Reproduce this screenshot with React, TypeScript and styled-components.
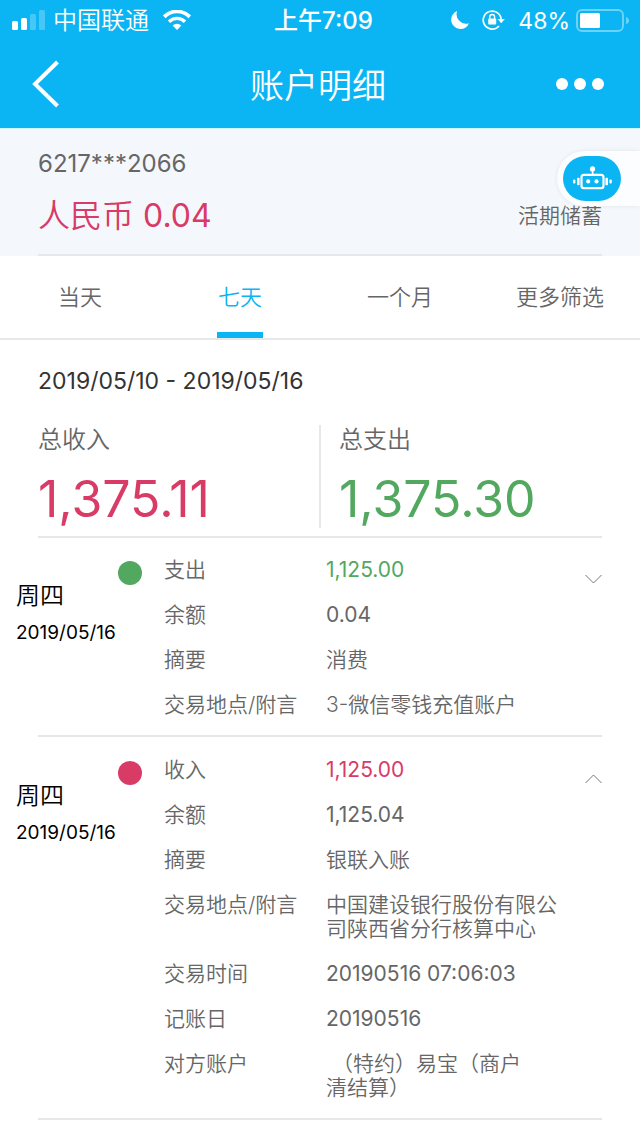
import React, { useState } from "react";
import styled, { createGlobalStyle } from "styled-components";

const color = {
  blue: "#0bb5f3",
  pink: "#d83b66",
  green: "#52a85f",
  grey: "#666666",
  line: "#e6e7e9",
};

const GlobalStyle = createGlobalStyle`
  * { box-sizing: border-box; }
  body {
    margin: 0;
    background: #ffffff;
    color: ${color.grey};
    font-family: Inter, "Noto Sans CJK SC", sans-serif;
    font-size: 21px;
    line-height: 24px;
    font-weight: 350;
  }
  button {
    font: inherit;
    color: inherit;
    background: none;
    border: 0;
    padding: 0;
    cursor: pointer;
  }
  h1, p, dl, dd, dt, ul { margin: 0; padding: 0; }
  svg { display: block; }
`;

const Page = styled.div`
  min-height: 100vh;
`;

const Top = styled.header`
  background: ${color.blue};
  color: #ffffff;
`;

const StatusBar = styled.div`
  display: grid;
  grid-template-columns: 1fr auto 1fr;
  align-items: center;
  height: 40px;
  padding: 0 11px 0 12px;
`;

const StatusGroup = styled.div<{ $end?: boolean }>`
  display: flex;
  align-items: center;
  justify-content: ${(p) => (p.$end ? "flex-end" : "flex-start")};
  font-size: ${(p) => (p.$end ? 23 : 24)}px;
  gap: ${(p) => (p.$end ? 6 : 8)}px;
`;

const StatusIcon = styled.span`
  margin-right: 7px;
`;

const Carrier = styled.span`
  padding-top: 2px;
  margin-right: 6px;
`;

const Charge = styled.span`
  padding-top: 2px;
  font-weight: 400;
`;

const Clock = styled.span`
  padding: 2px 0 0 6px;
  font-size: 24px;
  font-weight: 500;
`;

const NavBar = styled.nav`
  display: grid;
  grid-template-columns: 1fr auto 1fr;
  align-items: center;
  height: 88px;
  padding: 0 36px 0 32px;
`;

const Title = styled.h1`
  padding-top: 4px;
  font-size: 34px;
  line-height: 48px;
  font-weight: 350;
`;

const MoreButton = styled.button`
  justify-self: end;
`;

const BackButton = styled.button`
  justify-self: start;
`;

const Account = styled.section`
  position: relative;
  padding: 0 38px;
  background: #f4f8fc;
  border-top: 1px solid #cdfbff;
`;

const AccountBody = styled.div`
  display: flex;
  flex-direction: column;
  gap: 18px;
  height: 127px;
  padding-top: 21px;
  border-bottom: 2px solid ${color.line};
`;

const CardNumber = styled.p`
  font-size: 24px;
  line-height: 28px;
  font-weight: 400;
`;

const BalanceRow = styled.div`
  display: flex;
  justify-content: space-between;
  align-items: center;
  line-height: 40px;
`;

const Balance = styled.strong`
  font-size: 32px;
  font-weight: 350;
  color: ${color.pink};
`;

const BalanceAmount = styled.span`
  font-weight: 400;
`;

const AccountKind = styled.span`
  font-size: 21px;
`;

const Assistant = styled.button`
  position: absolute;
  top: 22px;
  right: 0;
  display: flex;
  align-items: center;
  width: 83px;
  height: 55px;
  padding-left: 6px;
  border-radius: 28px 0 0 28px;
  background: #fbfdfe;
  box-shadow: 0 0 4px rgba(0, 0, 0, 0.08);
`;

const AssistantFace = styled.span`
  display: flex;
  align-items: center;
  justify-content: center;
  width: 58px;
  height: 45px;
  border-radius: 23px;
  background: ${color.blue};
  color: #ffffff;
`;

const Tabs = styled.div`
  display: grid;
  grid-template-columns: repeat(4, 1fr);
  height: 84px;
  border-bottom: 2px solid ${color.line};
`;

const Tab = styled.button<{ $active: boolean }>`
  display: flex;
  flex-direction: column;
  align-items: center;
  justify-content: space-between;
  padding-top: 25px;
  font-size: 22px;
  line-height: 32px;
  color: ${(p) => (p.$active ? color.blue : color.grey)};

  &::after {
    content: "";
    width: 46px;
    height: 6px;
    background: ${(p) => (p.$active ? color.blue : "transparent")};
  }
`;

const Summary = styled.section`
  margin: 0 38px;
  padding: 27px 0 8px;
  border-bottom: 2px solid ${color.line};
`;

const Range = styled.p`
  margin-bottom: 30px;
  font-size: 23px;
  line-height: 28px;
  font-weight: 400;
  color: #333333;
`;

const Totals = styled.dl`
  display: grid;
  grid-template-columns: 1fr 1fr;
`;

const Total = styled.div`
  height: 103px;

  & + & {
    margin-left: -1px;
    padding-left: 18px;
    border-left: 2px solid ${color.line};
  }
`;

const TotalLabel = styled.dt`
  font-size: 24px;
  line-height: 30px;
`;

const TotalValue = styled.dd<{ $tone: string }>`
  padding-top: 14px;
  font-size: 50px;
  line-height: 60px;
  font-weight: 400;
  color: ${(p) => p.$tone};
`;

const Entries = styled.ul`
  list-style: none;
`;

const EntryBody = styled.div`
  display: grid;
  grid-template-columns: 102px 46px 1fr 24px;
  padding: 20px 38px 0 16px;
`;

const When = styled.div`
  padding-top: 24px;
  color: #000000;
`;

const Weekday = styled.p`
  font-size: 24px;
  line-height: 28px;
`;

const Day = styled.time`
  display: block;
  padding-top: 11px;
  font-size: 19px;
  line-height: 24px;
  font-weight: 400;
  white-space: nowrap;
`;

const Dot = styled.span<{ $tone: string }>`
  width: 24px;
  height: 24px;
  margin-top: 3px;
  border-radius: 50%;
  background: ${(p) => p.$tone};
`;

const Details = styled.dl`
  display: grid;
  gap: 21px;
  padding-bottom: 18px;
`;

const Detail = styled.div`
  display: grid;
  grid-template-columns: 162px 1fr;
  padding-right: 16px;
`;

const DetailValue = styled.dd<{ $tone?: string; $digits?: boolean }>`
  color: ${(p) => p.$tone ?? color.grey};
  font-weight: ${(p) => (p.$digits ? 400 : 350)};
  white-space: pre-line;
`;

const Toggle = styled.button`
  align-self: start;
  justify-self: end;
  padding: 16px 0 12px;
`;

const Divider = styled.div`
  height: 2px;
  margin: 0 38px 1px;
  background: ${color.line};
`;

const Signal = () => (
  <svg width="33" height="20" viewBox="0 0 33 20" fill="currentColor" aria-hidden="true">
    <rect x="0" y="11" width="6" height="9" rx="1.5" />
    <rect x="9" y="8" width="6" height="12" rx="1.5" />
    <rect x="18" y="4" width="6" height="16" rx="1.5" opacity="0.25" />
    <rect x="27" y="0" width="6" height="20" rx="1.5" opacity="0.25" />
  </svg>
);

const Wifi = () => (
  <svg width="28" height="20" viewBox="0 0 28 20" fill="none" stroke="currentColor" aria-hidden="true">
    <path d="M1.2 6.8a18 18 0 0 1 25.6 0" strokeWidth="3.8" />
    <path d="M6 11.7a11.3 11.3 0 0 1 16 0" strokeWidth="3.4" />
    <path d="M14 20l-4.4-4.4a6.3 6.3 0 0 1 8.8 0z" fill="currentColor" stroke="none" />
  </svg>
);

const Moon = () => (
  <svg width="18" height="18" viewBox="0 0 18 18" fill="currentColor" aria-hidden="true">
    <path d="M6.2 0A9.3 9.3 0 0 0 9 18a9.6 9.6 0 0 0 9-5.8A9.4 9.4 0 0 1 6.2 0z" />
  </svg>
);

const RotationLock = () => (
  <svg width="23" height="20" viewBox="0 0 23 20" fill="none" stroke="currentColor" aria-hidden="true">
    <path d="M17 16A9 9 0 1 1 19.2 9.6" strokeWidth="1.7" />
    <path d="M15.6 9h7.2l-3.6 4.2z" fill="currentColor" stroke="none" />
    <rect x="6.2" y="8.6" width="8" height="6" rx="1" fill="currentColor" stroke="none" />
    <path d="M7.8 9V6.9a2.4 2.4 0 0 1 4.8 0V9" strokeWidth="1.4" />
  </svg>
);

const Battery = () => (
  <svg width="53" height="24" viewBox="0 0 53 24" fill="none" aria-hidden="true">
    <rect x="1" y="2" width="46" height="21" rx="5" stroke="currentColor" strokeOpacity="0.4" strokeWidth="2" />
    <rect x="4" y="5" width="20" height="15" rx="1.5" fill="currentColor" />
    <path d="M50 9c2 .6 3 2 3 3.6s-1 3-3 3.6z" fill="currentColor" fillOpacity="0.4" />
  </svg>
);

const BackIcon = () => (
  <svg width="28" height="48" viewBox="0 0 28 48" fill="none" stroke="currentColor" strokeWidth="4" aria-hidden="true">
    <path d="M25.5 2L3 24l22.5 22" />
  </svg>
);

const MoreIcon = () => (
  <svg width="48" height="12" viewBox="0 0 48 12" fill="currentColor" aria-hidden="true">
    <circle cx="6" cy="6" r="6" />
    <circle cx="24" cy="6" r="6" />
    <circle cx="42" cy="6" r="6" />
  </svg>
);

const Robot = () => (
  <svg width="40" height="26" viewBox="0 0 40 26" fill="currentColor" aria-hidden="true">
    <circle cx="20.5" cy="2.9" r="2.6" />
    <rect x="19.8" y="4" width="1.6" height="5" />
    <rect x="9.5" y="8.8" width="22" height="13.4" rx="2.4" fill="none" stroke="currentColor" strokeWidth="2.2" />
    <circle cx="16.2" cy="15.4" r="2.1" />
    <circle cx="24.5" cy="15.4" r="2.1" />
    <rect x="5" y="11.8" width="2.6" height="7.4" rx="1" />
    <rect x="1" y="13.6" width="2.4" height="3.8" rx="1" />
    <rect x="33.4" y="11.8" width="2.6" height="7.4" rx="1" />
    <rect x="37.4" y="13.6" width="2.4" height="3.8" rx="1" />
  </svg>
);

const Chevron = ({ up }: { up: boolean }) => (
  <svg width="17" height="10" viewBox="0 0 17 10" fill="none" stroke="#777777" strokeWidth="1" aria-hidden="true">
    <path d={up ? "M.5 9l8-8 8 8" : "M.5 1l8 8 8-8"} />
  </svg>
);

type Field = { label: string; value: string; digits?: boolean };

type Transaction = {
  id: number;
  weekday: string;
  date: string;
  tone: string;
  fields: Field[];
};

const transactions: Transaction[] = [
  {
    id: 1,
    weekday: "周四",
    date: "2019/05/16",
    tone: color.green,
    fields: [
      { label: "支出", value: "1,125.00", digits: true },
      { label: "余额", value: "0.04", digits: true },
      { label: "摘要", value: "消费" },
      { label: "交易地点/附言", value: "3-微信零钱充值账户" },
    ],
  },
  {
    id: 2,
    weekday: "周四",
    date: "2019/05/16",
    tone: color.pink,
    fields: [
      { label: "收入", value: "1,125.00", digits: true },
      { label: "余额", value: "1,125.04", digits: true },
      { label: "摘要", value: "银联入账" },
      { label: "交易地点/附言", value: "中国建设银行股份有限公司陕西省分行核算中心" },
      { label: "交易时间", value: "20190516 07:06:03", digits: true },
      { label: "记账日", value: "20190516", digits: true },
      { label: "对方账户", value: "\u00a0（特约）易宝（商户\n清结算）" },
    ],
  },
];

const VISIBLE_WHEN_CLOSED = 4;
const tabs = ["当天", "七天", "一个月", "更多筛选"];

function TransactionItem({ item, startOpen }: { item: Transaction; startOpen: boolean }) {
  const [open, setOpen] = useState(startOpen);
  const fields = open ? item.fields : item.fields.slice(0, VISIBLE_WHEN_CLOSED);
  return (
    <li>
      <EntryBody>
        <When>
          <Weekday>{item.weekday}</Weekday>
          <Day>{item.date}</Day>
        </When>
        <Dot $tone={item.tone} />
        <Details>
          {fields.map((field, i) => (
            <Detail key={field.label}>
              <dt>{field.label}</dt>
              <DetailValue $digits={field.digits} $tone={i === 0 ? item.tone : undefined}>
                {field.value}
              </DetailValue>
            </Detail>
          ))}
        </Details>
        <Toggle aria-label={open ? "收起" : "展开"} aria-expanded={open} onClick={() => setOpen(!open)}>
          <Chevron up={open} />
        </Toggle>
      </EntryBody>
      <Divider />
    </li>
  );
}

export default function App() {
  const [active, setActive] = useState(1);
  return (
    <Page>
      <GlobalStyle />
      <Top>
        <StatusBar>
          <StatusGroup>
            <Signal />
            <Carrier>中国联通</Carrier>
            <Wifi />
          </StatusGroup>
          <Clock>上午7:09</Clock>
          <StatusGroup $end>
            <StatusIcon><Moon /></StatusIcon>
            <StatusIcon><RotationLock /></StatusIcon>
            <Charge>48%</Charge>
            <Battery />
          </StatusGroup>
        </StatusBar>
        <NavBar>
          <BackButton aria-label="返回"><BackIcon /></BackButton>
          <Title>账户明细</Title>
          <MoreButton aria-label="更多"><MoreIcon /></MoreButton>
        </NavBar>
      </Top>
      <main>
        <Account>
          <AccountBody>
            <CardNumber>6217***2066</CardNumber>
            <BalanceRow>
              <Balance>人民币 <BalanceAmount>0.04</BalanceAmount></Balance>
              <AccountKind>活期储蓄</AccountKind>
            </BalanceRow>
          </AccountBody>
          <Assistant aria-label="智能客服">
            <AssistantFace><Robot /></AssistantFace>
          </Assistant>
        </Account>
        <Tabs role="tablist">
          {tabs.map((name, i) => (
            <Tab key={name} role="tab" aria-selected={i === active} $active={i === active} onClick={() => setActive(i)}>
              {name}
            </Tab>
          ))}
        </Tabs>
        <Summary>
          <Range>2019/05/10 - 2019/05/16</Range>
          <Totals>
            <Total>
              <TotalLabel>总收入</TotalLabel>
              <TotalValue $tone={color.pink}>1,375.11</TotalValue>
            </Total>
            <Total>
              <TotalLabel>总支出</TotalLabel>
              <TotalValue $tone={color.green}>1,375.30</TotalValue>
            </Total>
          </Totals>
        </Summary>
        <Entries>
          {transactions.map((item) => (
            <TransactionItem key={item.id} item={item} startOpen={item.fields.length > VISIBLE_WHEN_CLOSED} />
          ))}
        </Entries>
      </main>
    </Page>
  );
}
